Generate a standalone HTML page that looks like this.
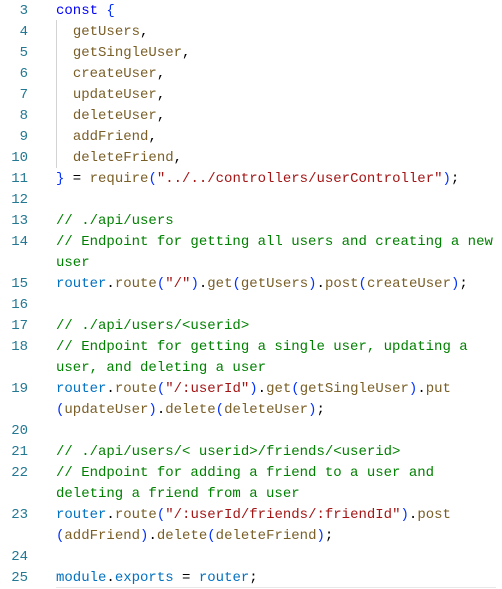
<!DOCTYPE html><html><head><style>
body{margin:0;background:#fff;width:502px;height:588px;overflow:hidden;position:relative;font-family:"Liberation Mono",monospace;font-size:14px}
.r{position:absolute;left:0;height:21px;line-height:21px;white-space:pre;margin-top:1px}
.n{position:absolute;left:0;width:28px;text-align:right;color:#237893}
.c{position:absolute;left:56px;color:#000}
.k{color:#0000ff}.f{color:#795e26}.m{color:#008000}.s{color:#a31515}.v{color:#0070c1}.b{color:#0431fa}.p{color:#001080}
.g{position:absolute;left:56px;top:20px;width:1px;height:148px;background:#d3d3d3}
.u{position:absolute;left:56px;top:587px;width:440px;height:1px;background:#e8e8e8}
</style></head><body>
<div class="g"></div>
<div class="r" style="top:0"><span class="n">3</span><span class="c"><span class="k">const</span> <span class="b">{</span></span></div>
<div class="r" style="top:21px"><span class="n">4</span><span class="c">  <span class="f">getUsers</span>,</span></div>
<div class="r" style="top:42px"><span class="n">5</span><span class="c">  <span class="f">getSingleUser</span>,</span></div>
<div class="r" style="top:63px"><span class="n">6</span><span class="c">  <span class="f">createUser</span>,</span></div>
<div class="r" style="top:84px"><span class="n">7</span><span class="c">  <span class="f">updateUser</span>,</span></div>
<div class="r" style="top:105px"><span class="n">8</span><span class="c">  <span class="f">deleteUser</span>,</span></div>
<div class="r" style="top:126px"><span class="n">9</span><span class="c">  <span class="f">addFriend</span>,</span></div>
<div class="r" style="top:147px"><span class="n">10</span><span class="c">  <span class="f">deleteFriend</span>,</span></div>
<div class="r" style="top:168px"><span class="n">11</span><span class="c"><span class="b">}</span> = <span class="f">require</span><span class="b">(</span><span class="s">"../../controllers/userController"</span><span class="b">)</span>;</span></div>
<div class="r" style="top:189px"><span class="n">12</span></div>
<div class="r" style="top:210px"><span class="n">13</span><span class="c m">// ./api/users</span></div>
<div class="r" style="top:231px"><span class="n">14</span><span class="c m">// Endpoint for getting all users and creating a new</span></div>
<div class="r" style="top:252px"><span class="c m">user</span></div>
<div class="r" style="top:273px"><span class="n">15</span><span class="c"><span class="v">router</span>.<span class="f">route</span><span class="b">(</span><span class="s">"/"</span><span class="b">)</span>.<span class="f">get</span><span class="b">(</span><span class="f">getUsers</span><span class="b">)</span>.<span class="f">post</span><span class="b">(</span><span class="f">createUser</span><span class="b">)</span>;</span></div>
<div class="r" style="top:294px"><span class="n">16</span></div>
<div class="r" style="top:315px"><span class="n">17</span><span class="c m">// ./api/users/&lt;userid&gt;</span></div>
<div class="r" style="top:336px"><span class="n">18</span><span class="c m">// Endpoint for getting a single user, updating a</span></div>
<div class="r" style="top:357px"><span class="c m">user, and deleting a user</span></div>
<div class="r" style="top:378px"><span class="n">19</span><span class="c"><span class="v">router</span>.<span class="f">route</span><span class="b">(</span><span class="s">"/:userId"</span><span class="b">)</span>.<span class="f">get</span><span class="b">(</span><span class="f">getSingleUser</span><span class="b">)</span>.<span class="f">put</span></span></div>
<div class="r" style="top:399px"><span class="c"><span class="b">(</span><span class="f">updateUser</span><span class="b">)</span>.<span class="f">delete</span><span class="b">(</span><span class="f">deleteUser</span><span class="b">)</span>;</span></div>
<div class="r" style="top:420px"><span class="n">20</span></div>
<div class="r" style="top:441px"><span class="n">21</span><span class="c m">// ./api/users/&lt; userid&gt;/friends/&lt;userid&gt;</span></div>
<div class="r" style="top:462px"><span class="n">22</span><span class="c m">// Endpoint for adding a friend to a user and</span></div>
<div class="r" style="top:483px"><span class="c m">deleting a friend from a user</span></div>
<div class="r" style="top:504px"><span class="n">23</span><span class="c"><span class="v">router</span>.<span class="f">route</span><span class="b">(</span><span class="s">"/:userId/friends/:friendId"</span><span class="b">)</span>.<span class="f">post</span></span></div>
<div class="r" style="top:525px"><span class="c"><span class="b">(</span><span class="f">addFriend</span><span class="b">)</span>.<span class="f">delete</span><span class="b">(</span><span class="f">deleteFriend</span><span class="b">)</span>;</span></div>
<div class="r" style="top:546px"><span class="n">24</span></div>
<div class="r" style="top:567px"><span class="n">25</span><span class="c"><span class="v">module</span>.<span class="v">exports</span> = <span class="v">router</span>;</span></div>
<div class="u"></div>
</body></html>
